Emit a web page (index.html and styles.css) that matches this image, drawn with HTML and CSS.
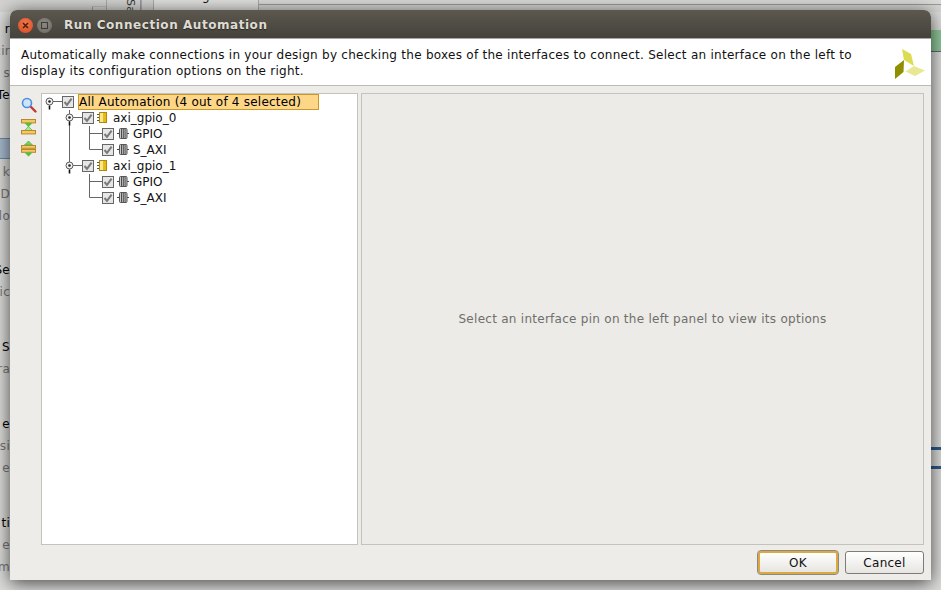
FILE: index.html
```html
<!DOCTYPE html>
<html lang="en">
<head>
<meta charset="utf-8">
<title>Run Connection Automation</title>
<link rel="stylesheet" href="styles.css">
</head>
<body>
<svg class="defs" width="0" height="0" aria-hidden="true">
  <defs>
    <g id="knob">
      <circle cx="0" cy="0" r="3.500" fill="#f4f4f2" stroke="#555" stroke-width="1"/>
      <circle cx="0" cy="0" r="1.300" fill="#222"/>
      <path d="M0 4V8" stroke="#111" stroke-width="1.600" fill="none"/>
    </g>
    <g id="check">
      <rect x=".5" y=".5" width="11" height="11" fill="#e6e6e6" stroke="#666"/>
      <path d="M2.500 6 5 8.800 9.600 2.600" fill="none" stroke="#7a7a7a" stroke-width="2"/>
    </g>
    <g id="cell">
      <path d="M0 2.500H2M0 5.500H2M0 8.500H2" stroke="#555" stroke-width="1"/>
      <rect x="2.500" y=".5" width="7" height="10" fill="#e9bb12" stroke="#a88a14"/>
      <rect x="3" y="1" width="3" height="9" fill="#f9e68c"/>
    </g>
    <g id="port">
      <path d="M0 5.500H2M10 5.500H12" stroke="#444" stroke-width="1"/>
      <path d="M1.500 5.500 2.500 3.500V7.500Z" fill="#444"/>
      <rect x="2.500" y=".5" width="7.500" height="10" rx="1" fill="#c9c9c9" stroke="#555"/>
      <path d="M4.500 1V10M6.300 1V10M8.100 1V10" stroke="#4d4d4d" stroke-width="1"/>
    </g>
  </defs>
</svg>

<div class="desktop">
  <div class="top-strip">
    <div class="strip-a"></div>
    <div class="strip-b"></div>
    <div class="strip-c"><span class="vert">Sa</span></div>
    <div class="strip-d"></div>
    <div class="strip-tab"><span class="tab-text">g</span></div>
    <div class="strip-e"></div>
  </div>
  <div class="mid">
    <div class="side-left">
      <div class="sg g1">
        <div class="bold">r</div><div>cir</div><div>s</div><div class="bold">Te</div>
      </div>
      <div class="sel-bar"></div>
      <div class="sg g2"><div>k</div><div>D</div><div>lo</div></div>
      <div class="sg g3"><div class="bold">Se</div><div>tic</div></div>
      <div class="sg g4"><div class="bold">S</div><div>ra</div></div>
      <div class="sg g5"><div class="bold">e</div><div>si</div><div>e</div></div>
      <div class="sg g6"><div class="bold">ti</div><div>e</div><div>m</div></div>
    </div>
    <div class="side-right">
      <div class="green"></div>
      <div class="blue b1"></div>
      <div class="blue b2"></div>
    </div>
  </div>
</div>

<section class="dialog">
  <header class="titlebar">
    <span class="win-btn close">
      <svg width="15" height="15" viewBox="0 0 15 15"><path d="M5 5l5 5M10 5l-5 5" stroke="#4a2015" stroke-width="1.600"/></svg>
    </span>
    <span class="win-btn max">
      <svg width="15" height="15" viewBox="0 0 15 15"><rect x="4.500" y="4.500" width="6" height="6" fill="none" stroke="#3c3b36"/></svg>
    </span>
    <h1 class="title">Run Connection Automation</h1>
  </header>

  <div class="intro">
    <p class="intro-text">Automatically make connections in your design by checking the boxes of the interfaces to connect. Select an interface on the left to<br>display its configuration options on the right.</p>
    <svg class="logo" width="32" height="32" viewBox="0 0 32 32">
      <path d="M8 0 17 5 20 17 10 11Z" fill="#dcdc50"/>
      <path d="M10 11 9.500 23 1 30V18Z" fill="#8f8f00"/>
      <path d="M20 17 31 21.500 21 27 11.500 22.500Z" fill="#e7e794"/>
    </svg>
  </div>

  <div class="main">
    <div class="tools">
      <svg width="16" height="16" viewBox="0 0 16 16">
        <path d="M9.500 9.500 14.500 14.500" stroke="#c43a2c" stroke-width="2.400" stroke-linecap="round"/>
        <circle cx="6" cy="6" r="4.500" fill="#cfe4fa" stroke="#4d8fdc" stroke-width="1.600"/>
      </svg>
      <svg width="16" height="16" viewBox="0 0 16 16">
        <rect x=".5" y=".5" width="14" height="3.400" fill="#f6c667" stroke="#b8892a"/>
        <path d="M3.500 4 11.500 4 7.500 8Z" fill="#4cc23a"/>
        <path d="M3.500 11.500 11.500 11.500 7.500 7.500Z" fill="#a8e89a" stroke="#3aa52c" stroke-width=".6"/>
        <rect x=".5" y="11.500" width="14" height="3.400" fill="#f6c667" stroke="#b8892a"/>
      </svg>
      <svg width="16" height="16" viewBox="0 0 16 16">
        <path d="M3.500 4 7.500 0 11.500 4Z" fill="#6fd65c" stroke="#3aa52c" stroke-width=".6"/>
        <rect x=".5" y="4.500" width="14" height="2.800" fill="#f6c667" stroke="#b8892a"/>
        <rect x=".5" y="8.500" width="14" height="2.800" fill="#f6c667" stroke="#b8892a"/>
        <path d="M3.500 11.500 11.500 11.500 7.500 15.500Z" fill="#4cc23a"/>
      </svg>
    </div>

    <div class="tree">
      <div class="row">
        <svg width="20" height="16" viewBox="0 0 20 16"><path d="M11 7.500H20" stroke="#666"/><use href="#knob" x="7.500" y="7.500"/></svg>
        <svg width="12" height="12" viewBox="0 0 12 12"><use href="#check"/></svg>
        <span class="label selected">All Automation (4 out of 4 selected)</span>
      </div>
      <div class="row">
        <svg width="40" height="16" viewBox="0 0 40 16"><path d="M27.500 0V16M31 7.500H40" stroke="#666"/><use href="#knob" x="27.500" y="7.500"/></svg>
        <svg width="12" height="12" viewBox="0 0 12 12"><use href="#check"/></svg>
        <svg class="node-icon" width="12" height="12" viewBox="0 0 12 12"><use href="#cell"/></svg>
        <span class="label">axi_gpio_0</span>
      </div>
      <div class="row">
        <svg width="60" height="16" viewBox="0 0 60 16"><path d="M27.500 0V16M47.500 0V16M47.500 7.500H60" stroke="#666"/></svg>
        <svg width="12" height="12" viewBox="0 0 12 12"><use href="#check"/></svg>
        <svg class="node-icon" width="12" height="12" viewBox="0 0 12 12"><use href="#port"/></svg>
        <span class="label">GPIO</span>
      </div>
      <div class="row">
        <svg width="60" height="16" viewBox="0 0 60 16"><path d="M27.500 0V16M47.500 0V7.500H60" fill="none" stroke="#666"/></svg>
        <svg width="12" height="12" viewBox="0 0 12 12"><use href="#check"/></svg>
        <svg class="node-icon" width="12" height="12" viewBox="0 0 12 12"><use href="#port"/></svg>
        <span class="label">S_AXI</span>
      </div>
      <div class="row">
        <svg width="40" height="16" viewBox="0 0 40 16"><path d="M27.500 0V7M31 7.500H40" stroke="#666"/><use href="#knob" x="27.500" y="7.500"/></svg>
        <svg width="12" height="12" viewBox="0 0 12 12"><use href="#check"/></svg>
        <svg class="node-icon" width="12" height="12" viewBox="0 0 12 12"><use href="#cell"/></svg>
        <span class="label">axi_gpio_1</span>
      </div>
      <div class="row">
        <svg width="60" height="16" viewBox="0 0 60 16"><path d="M47.500 0V16M47.500 7.500H60" stroke="#666"/></svg>
        <svg width="12" height="12" viewBox="0 0 12 12"><use href="#check"/></svg>
        <svg class="node-icon" width="12" height="12" viewBox="0 0 12 12"><use href="#port"/></svg>
        <span class="label">GPIO</span>
      </div>
      <div class="row">
        <svg width="60" height="16" viewBox="0 0 60 16"><path d="M47.500 0V7.500H60" fill="none" stroke="#666"/></svg>
        <svg width="12" height="12" viewBox="0 0 12 12"><use href="#check"/></svg>
        <svg class="node-icon" width="12" height="12" viewBox="0 0 12 12"><use href="#port"/></svg>
        <span class="label">S_AXI</span>
      </div>
    </div>

    <div class="options">Select an interface pin on the left panel to view its options</div>
  </div>

  <footer class="footer">
    <button class="btn primary">OK</button>
    <button class="btn">Cancel</button>
  </footer>
</section>
</body>
</html>
```
FILE: styles.css
```css
* { box-sizing: border-box; }
html, body { margin: 0; padding: 0; height: 100%; }
body {
  width: 941px;
  height: 590px;
  overflow: hidden;
  position: relative;
  background: #dcdcda;
  font-family: "DejaVu Sans", sans-serif;
  font-size: 12px;
  letter-spacing: .27px;
  color: #111;
}
.defs { position: absolute; }

.desktop { display: flex; flex-direction: column; width: 941px; height: 590px; }
.top-strip { display: flex; height: 12px; flex: none; background: #d2d2d0; }
.strip-a { width: 92px; }
.strip-b { width: 14px; border-left: 1px solid #999; border-top: 1px solid #bbb; margin-top: 6px; }
.strip-c { width: 35px; border-left: 1px solid #aaa; border-right: 1px solid #999; overflow: hidden; }
.vert { display: block; transform: rotate(90deg); font-size: 11px; line-height: 12px; width: 16px; margin: 1px 0 0 15px; color: #333; }
.strip-d { width: 12px; border-left: 1px solid #aaa; }
.strip-tab { width: 106px; background: #e0e0de; border-left: 1px solid #aaa; border-right: 1px solid #aaa; overflow: hidden; text-align: center; }
.tab-text { display: block; line-height: 12px; margin-top: -10px; }
.strip-e { flex: 1; background: linear-gradient(#dadad8 0 4px, #999 4px 5px, #d4d4d2 5px); }

.mid { flex: 1; display: flex; justify-content: space-between; min-height: 0; }
.side-left { width: 10px; display: flex; flex-direction: column; overflow: hidden; }
.side-right { width: 10px; display: flex; flex-direction: column; }
.sg { display: flex; flex-direction: column; flex: none; color: #777; }
.sg div { height: 22px; line-height: 22px; text-align: right; white-space: nowrap; direction: rtl; }
.sg .bold { color: #000; }
.g1 { margin-top: 6px; }
.sel-bar { height: 21px; margin-top: 32px; flex: none; background: #a9bbd0; border-top: 1px solid #6d8aa8; border-bottom: 1px solid #6d8aa8; }
.g2 { margin-top: 2px; }
.g3 { margin-top: 32px; }
.g4 { margin-top: 33px; }
.g5 { margin-top: 33px; }
.g6 { margin-top: 33px; }
.green { height: 22px; margin-top: 18px; flex: none; background: #8fc79a; border-bottom: 1px solid #666; }
.blue { height: 3px; flex: none; background: #2d5a8a; }
.b1 { margin-top: 395px; }
.b2 { margin-top: 16px; }

.dialog {
  position: absolute;
  left: 10px;
  top: 10px;
  width: 921px;
  height: 570px;
  display: flex;
  flex-direction: column;
  background: #edece8;
  border-radius: 7px 7px 0 0;
  box-shadow: 0 3px 18px rgba(0, 0, 0, .7);
}
.titlebar {
  height: 28px;
  flex: none;
  display: flex;
  align-items: center;
  padding: 2px 0 0 8px;
  gap: 4px;
  border-radius: 7px 7px 0 0;
  background: linear-gradient(#5c584f, #44423b);
}
.win-btn { width: 15px; height: 15px; border-radius: 50%; display: block; flex: none; }
.win-btn svg { display: block; }
.close { background: radial-gradient(circle at 50% 35%, #f2774a, #d9481e); }
.max { background: radial-gradient(circle at 50% 35%, #8a887f, #6c6a62); }
.title {
  margin: 0 0 0 8px;
  font-size: 12px;
  font-weight: bold;
  letter-spacing: .55px;
  color: #dfdbd2;
  text-shadow: 0 1px 1px #2a2925;
}
.intro {
  height: 48px;
  flex: none;
  display: flex;
  justify-content: space-between;
  background: #fff;
  border-top: 1px solid #aaa8a2;
  border-bottom: 1px solid #bdbbb5;
  padding: 8px 5px 0 11px;
}
.intro-text { margin: 0; line-height: 16px; color: #111; white-space: nowrap; }
.logo { display: block; flex: none; margin-top: 2px; }

.main { flex: 1; min-height: 0; display: flex; padding: 7px 7px 0 0; }
.tools { width: 31px; flex: none; display: flex; flex-direction: column; align-items: flex-start; gap: 6px; padding: 4px 0 0 11px; }
.tools svg { display: block; }
.tree { width: 317px; flex: none; background: #fff; border: 1px solid #c4c2bd; }
.row { height: 16px; display: flex; align-items: center; }
.row > svg { display: block; flex: none; }
.node-icon { margin-left: 3px; }
.label { margin-left: 4px; line-height: 16px; white-space: nowrap; color: #111; letter-spacing: 0; }
.selected { width: 241px; height: 16px; line-height: 14px; letter-spacing: .22px; background: #fdd688; border: 1px solid #c8982c; color: #000; }
.options {
  flex: 1;
  margin-left: 3px;
  display: flex;
  align-items: center;
  justify-content: center;
  background: #ecebe7;
  border: 1px solid #c4c2bd;
  color: #6f6f6c;
}

.footer { height: 35px; flex: none; display: flex; justify-content: flex-end; gap: 7px; padding: 6px 7px 0 0; }
.btn {
  width: 79px;
  height: 23px;
  padding: 0;
  font: 12px "DejaVu Sans", sans-serif;
  letter-spacing: .27px;
  color: #111;
  background: linear-gradient(#fff, #e6e5e1);
  border: 1px solid #7d7c78;
  border-radius: 3px;
}
.primary {
  width: 80px;
  border: 2px solid #dba93f;
  outline: 1px solid #8a8982;
}
```
